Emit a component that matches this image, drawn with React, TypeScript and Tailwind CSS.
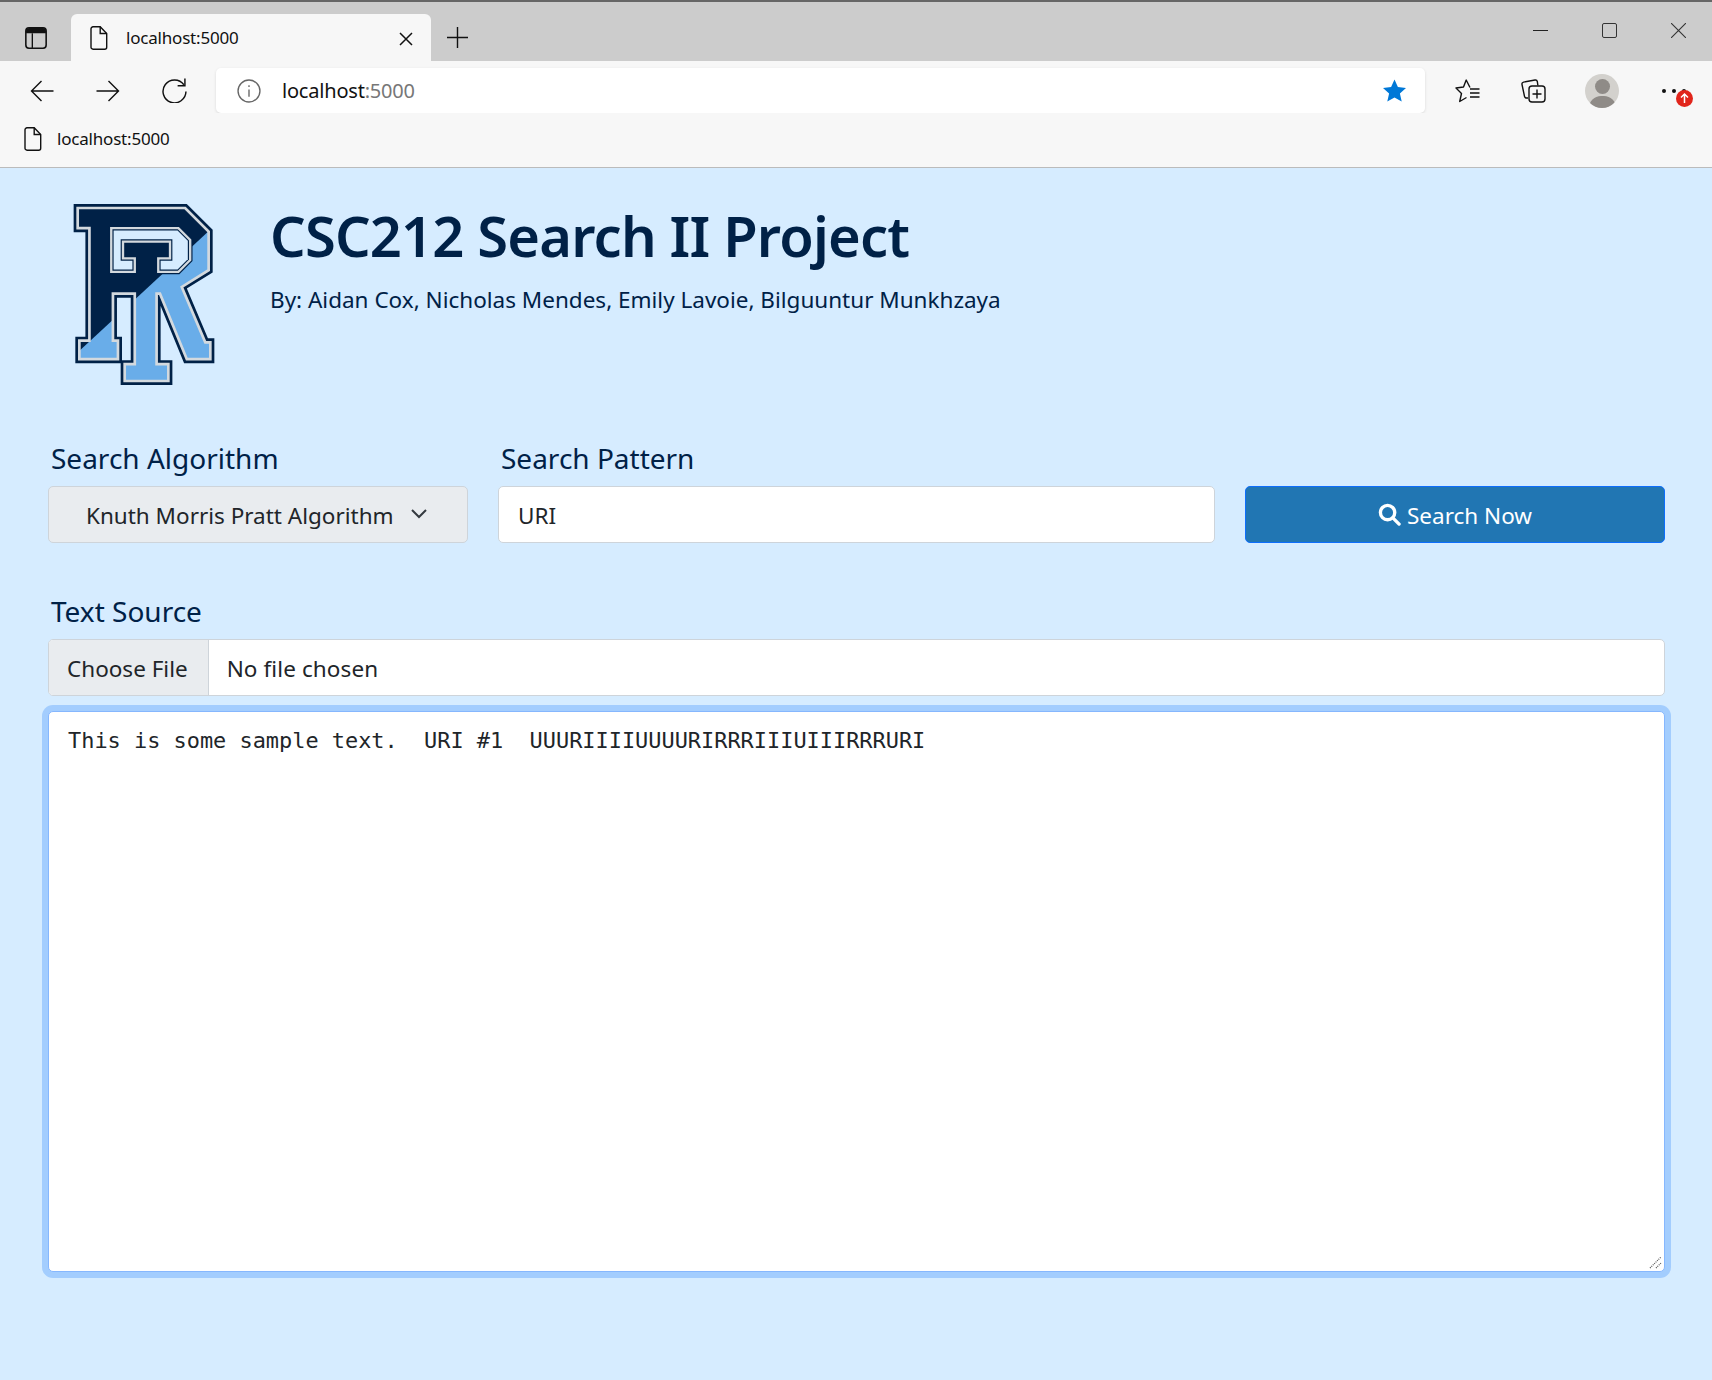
const FONT = "font-['Noto_Sans',sans-serif]";

const outer =
  "85,55 405,55 475,125 475,240 395,290 465,455 480,455 480,505 410,505 330,310 320,310 320,520 355,520 355,570 225,570 225,520 255,520 255,310 190,310 190,450 205,450 205,505 90,505 90,450 120,450 120,115 85,115";
const counter =
  "185,115 385,115 420,150 420,210 385,245 325,245 325,205 360,205 360,155 220,155 220,205 255,205 255,245 185,245";

function Logo() {
  return (
    <svg viewBox="73 43 419 539" className="h-[181px] w-[142px]">
      <defs>
        <clipPath id="upper">
          <polygon points="60,40 500,40 500,101 60,508" />
        </clipPath>
      </defs>
      <polygon points={outer} fill="#002147" stroke="#002147" strokeWidth="24" />
      <polygon points={outer} fill="#69ade9" />
      <polygon points={outer} fill="#002147" clipPath="url(#upper)" />
      <polygon points={outer} fill="none" stroke="#d3d9de" strokeWidth="8" />
      <polygon points={counter} fill="#d6ecff" stroke="#002147" strokeWidth="14" />
      <polygon points={counter} fill="none" stroke="#d3d9de" strokeWidth="7" />
    </svg>
  );
}

function FileIcon({ className }: { className: string }) {
  return (
    <svg viewBox="0 0 17 24" fill="none" stroke="#111" strokeWidth="1.4" className={className}>
      <path d="M2.5 .8h7.2l6.5 6.7v13.7a2 2 0 0 1-2 2H2.5a2 2 0 0 1-2-2V2.8a2 2 0 0 1 2-2z" />
      <path d="M9.7 .8v6.7h6.5" />
    </svg>
  );
}

function TabStrip() {
  return (
    <div className="flex h-[61px] items-end border-t-2 border-[#666] bg-[#cccccc]">
      <svg viewBox="0 0 21 21" fill="none" className="mb-[12px] ml-[25px] h-[22px] w-[22px]">
        <rect x=".8" y=".8" width="19.4" height="19.4" rx="3" stroke="#111" strokeWidth="1.5" />
        <path d="M1 4a3 3 0 0 1 3-3h13a3 3 0 0 1 3 3v2H1z" fill="#111" />
        <path d="M7 6v14" stroke="#111" strokeWidth="1.3" />
      </svg>
      <div className="ml-[24px] flex h-[47px] w-[360px] items-center rounded-t-md bg-[#f7f7f7] pl-[19px]">
        <FileIcon className="h-[24px] w-[18px]" />
        <span className={`ml-[18px] text-[17px] tracking-[-0.2px] text-[#111] ${FONT}`}>localhost:5000</span>
        <svg viewBox="0 0 14 14" stroke="#111" strokeWidth="1.5" className="mb-[-3px] ml-auto mr-[18px] h-[14px] w-[14px]">
          <path d="M1 1l12 12M13 1L1 13" />
        </svg>
      </div>
      <svg viewBox="0 0 21 21" stroke="#111" strokeWidth="1.4" className="mb-[13px] ml-[16px] h-[21px] w-[21px]">
        <path d="M10.5 0v21M0 10.5h21" />
      </svg>
      <div className="mb-[23px] ml-auto flex items-center pr-[26px]">
        <div className="h-[1.5px] w-[15px] bg-[#222]" />
        <div className="ml-[54px] h-[15px] w-[15px] rounded-[2px] border-[1.5px] border-[#333]" />
        <svg viewBox="0 0 15 15" stroke="#333" strokeWidth="1.1" className="ml-[54px] h-[15px] w-[15px]">
          <path d="M0 0l15 15M15 0L0 15" />
        </svg>
      </div>
    </div>
  );
}

function Toolbar() {
  return (
    <div className="flex h-[52px] items-center bg-[#f7f7f7] pt-[7px]">
      <svg viewBox="0 0 23 22" fill="none" stroke="#111" strokeWidth="1.4" className="ml-[30px] h-[22px] w-[24px]">
        <path d="M23 11H1M11 1L1 11l10 10" />
      </svg>
      <svg viewBox="0 0 23 22" fill="none" stroke="#111" strokeWidth="1.4" className="ml-[42px] h-[22px] w-[24px]">
        <path d="M0 11h22M12 1l10 10-10 10" />
      </svg>
      <svg viewBox="0 0 24 24" fill="none" stroke="#111" strokeWidth="1.4" className="ml-[42px] h-[25px] w-[25px]">
        <path d="M21 6.5A11 11 0 1 0 23 13" />
        <path d="M22 .5v7h-7" />
      </svg>
      <div className="ml-[29px] flex h-[45px] w-[1209px] items-center rounded-[5px] bg-white pl-[21px] pr-[18px] shadow-[0_1px_3px_rgba(0,0,0,0.12)]">
        <svg viewBox="0 0 23 23" fill="none" stroke="#666" strokeWidth="1.3" className="h-[24px] w-[24px]">
          <circle cx="11.5" cy="11.5" r="10.5" />
          <path d="M11.5 10v7M11.5 6v1.6" />
        </svg>
        <span className={`ml-[21px] text-[20px] tracking-[-0.2px] text-[#111] ${FONT}`}>
          localhost<span className="text-[#777]">:5000</span>
        </span>
        <svg viewBox="0 0 24 23" className="ml-auto mb-px h-[23px] w-[25px]">
          <path
            d="M12 .5l3.4 7.6 8.1.8-6.1 5.5 1.8 8.1L12 18.4l-7.2 4.1 1.8-8.1L.5 8.9l8.1-.8z"
            fill="#0078d7"
          />
        </svg>
      </div>
      <svg viewBox="0 0 25 24" fill="none" stroke="#111" strokeWidth="1.4" className="ml-[30px] h-[24px] w-[25px]">
        <path d="M15 8.5L11.2 1 8.5 8 1 9l5.5 5.5-1.8 8 6.8-4" strokeLinejoin="round" />
        <path d="M15 10h9.5M15 14h9.5M15 18h9.5" />
      </svg>
      <svg viewBox="0 0 25 24" fill="none" stroke="#111" strokeWidth="1.4" className="ml-[41px] h-[24px] w-[25px]">
        <path d="M7 19H5.5a2 2 0 0 1-2-1.6L1 5.5a2 2 0 0 1 1.6-2.4L14 1a2 2 0 0 1 2.3 1.5l.6 4" />
        <rect x="8" y="7" width="16" height="16" rx="3" />
        <path d="M16 10.5v9M11.5 15h9" />
      </svg>
      <div className="relative ml-[39px] flex h-[34px] w-[34px] flex-col items-center overflow-hidden rounded-full bg-[#d3d1cd]">
        <div className="mt-[5px] h-[15px] w-[15px] shrink-0 rounded-full bg-[#8f8b87]" />
        <div className="mt-[2px] h-[24px] w-[27px] shrink-0 rounded-full bg-[#8f8b87]" />
      </div>
      <div className="relative ml-[43px] flex gap-[6px]">
        <div className="h-[4px] w-[4px] rounded-full bg-[#111]" />
        <div className="h-[4px] w-[4px] rounded-full bg-[#111]" />
        <div className="h-[4px] w-[4px] rounded-full bg-[#111]" />
        <svg viewBox="0 0 17 17" className="absolute left-[14px] top-[1px] h-[17px] w-[17px]">
          <circle cx="8.5" cy="8.5" r="8.5" fill="#e1251b" />
          <path d="M8.5 13V4.5M5 7.5l3.5-3.5L12 7.5" fill="none" stroke="#fff" strokeWidth="1.5" />
        </svg>
      </div>
    </div>
  );
}

function Bookmarks() {
  return (
    <div className="flex h-[55px] items-center border-b border-[#bbb] bg-[#f7f7f7] pb-[2px] pl-[24px]">
      <FileIcon className="h-[24px] w-[18px]" />
      <span className={`ml-[15px] text-[17px] tracking-[-0.2px] text-[#111] ${FONT}`}>localhost:5000</span>
    </div>
  );
}

export default function App() {
  return (
    <div className={`flex min-h-screen flex-col bg-[#d6ecff] ${FONT}`}>
      <TabStrip />
      <Toolbar />
      <Bookmarks />

      <div className="flex flex-col pl-[48px] pr-[47px]">
        <div className="flex pl-[25px] pt-[36px]">
          <Logo />
          <div className="ml-[55px] -mt-[4px]">
            <h1 className="text-[56px] font-semibold leading-[70px] tracking-[-0.8px] text-[#002147]">
              CSC212 Search II Project
            </h1>
            <p className="mt-[15px] text-[22.5px] leading-[30px] text-[#002147]">
              By: Aidan Cox, Nicholas Mendes, Emily Lavoie, Bilguuntur Munkhzaya
            </p>
          </div>
        </div>

        <div className="mt-[53px] grid grid-cols-[420px_717px_420px] gap-x-[30px]">
          <div>
            <label className="block pl-[3px] text-[28px] leading-[40px] text-[#002147]">Search Algorithm</label>
            <div className="mt-[8px] flex h-[57px] items-center rounded-[5px] border border-[#ced4da] bg-[#e9ecef] pl-[37px] pt-[2px] text-[22.5px] text-[#212529]">
              Knuth Morris Pratt Algorithm
              <svg viewBox="0 0 16 10" fill="none" stroke="#343a40" strokeWidth="2" className="mb-[3px] ml-[17px] h-[10px] w-[16px]">
                <path d="M1 1l7 7 7-7" />
              </svg>
            </div>
          </div>
          <div>
            <label className="block pl-[3px] text-[28px] leading-[40px] text-[#002147]">Search Pattern</label>
            <input
              defaultValue="URI"
              className="mt-[8px] block h-[57px] w-full rounded-[5px] border border-[#ced4da] bg-white px-[19px] pt-[2px] text-[22.5px] text-[#212529] outline-none"
            />
          </div>
          <div className="flex items-end">
            <button className="flex h-[57px] w-full items-center justify-center gap-[6px] rounded-[5px] border border-[#0d6efd] bg-[#2176b3] pt-[2px] text-[22.5px] text-white">
              <svg viewBox="0 0 24 24" fill="none" stroke="#fff" className="mb-[2px] h-[23px] w-[23px]">
                <circle cx="10" cy="10" r="7.5" strokeWidth="3.5" />
                <path d="M15.5 15.5L22 22" strokeWidth="3.5" strokeLinecap="round" />
              </svg>
              Search Now
            </button>
          </div>
        </div>

        <label className="mt-[48px] block pl-[3px] text-[28px] leading-[40px] text-[#002147]">Text Source</label>
        <div className="mt-[8px] flex h-[57px] overflow-hidden rounded-[5px] border border-[#ced4da] bg-white text-[22.5px] text-[#212529]">
          <div className="flex items-center border-r border-[#ced4da] bg-[#e9ecef] pl-[18px] pr-[20px] pt-[3px]">Choose File</div>
          <div className="flex items-center pl-[18px] pt-[3px] tracking-[0.1px]">No file chosen</div>
        </div>
        <div className="relative mt-[15px]">
          <textarea
            defaultValue="This is some sample text.  URI #1  UUURIIIIUUUURIRRRIIIUIIIRRRURI"
            className="block h-[561px] w-full resize-none rounded-[5px] border border-[#86b7fe] bg-white px-[19px] py-[12px] font-['DejaVu_Sans_Mono',monospace] text-[21.92px] leading-[33px] text-[#212529] outline-none ring-[6px] ring-[#a3cdfe]"
          />
          <svg viewBox="0 0 13 13" stroke="#555" strokeWidth="1.2" strokeDasharray="1 1" className="absolute bottom-[3px] right-[3px] h-[13px] w-[13px]">
            <path d="M1 12L12 1M7 12l5-5" />
          </svg>
        </div>
      </div>
    </div>
  );
}
